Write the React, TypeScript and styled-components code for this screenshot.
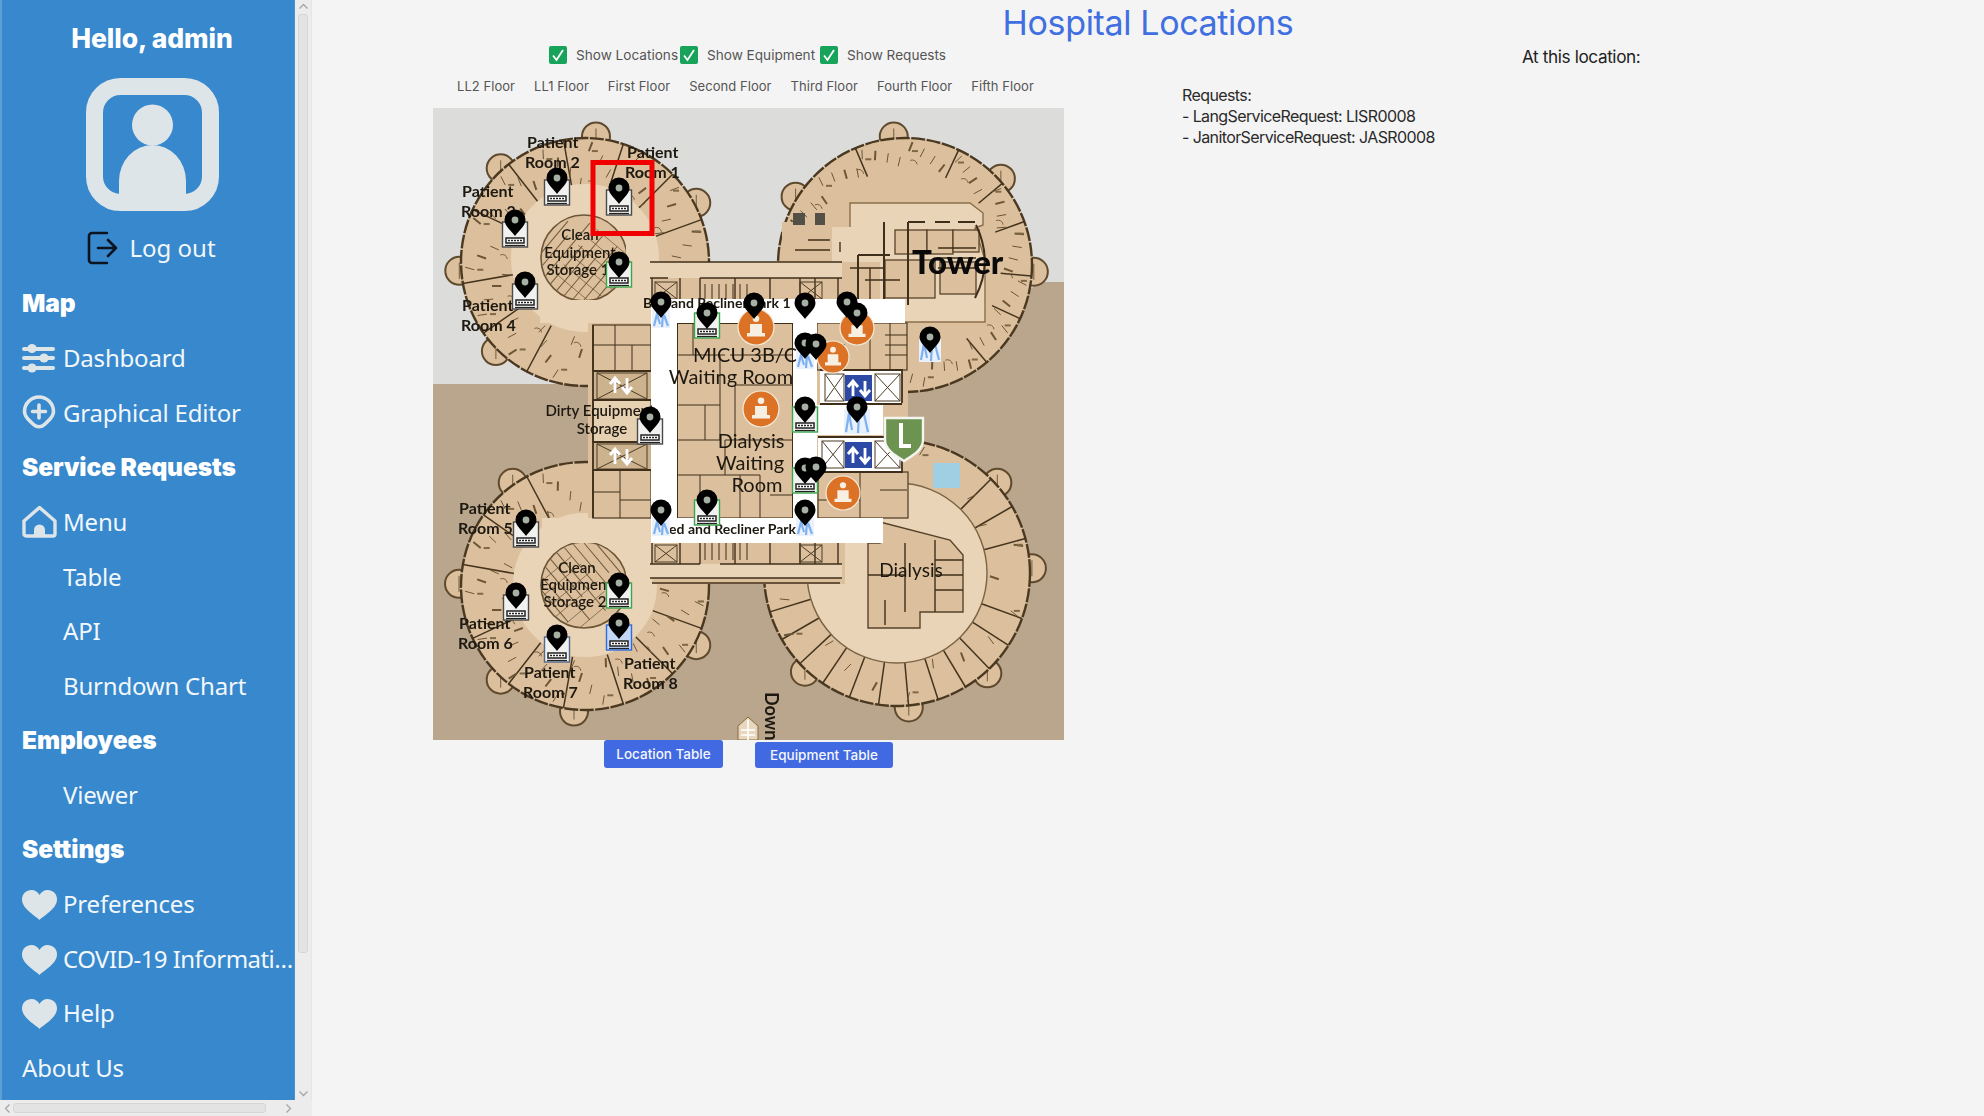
import React from "react";
import styled, { createGlobalStyle } from "styled-components";

const Global = createGlobalStyle`
  html, body { margin: 0; padding: 0; background: #f4f4f4; overflow: hidden; }
  #root { width: 1984px; height: 1116px; }
  * { box-sizing: border-box; }
`;

const Shell = styled.div`
  display: flex;
  width: 1984px;
  height: 1116px;
  background: #f4f4f4;
  font-family: "Inter", "Liberation Sans", sans-serif;
`;

const Rail = styled.div`
  flex: 0 0 312px;
  display: grid;
  grid-template-columns: 295px 17px;
  grid-template-rows: 1100px 16px;
`;

const Sidebar = styled.nav`
  background: #3788cc;
  border-left: 2px solid #5b9fd6;
  border-right: 1px solid #4a92ce;
  overflow: hidden;
  color: #fff;
  font-family: "Noto Sans", "Open Sans", sans-serif;
`;

const Greeting = styled.div`
  height: 76px;
  text-align: center;
  font: 800 26.5px/76px "Inter", sans-serif;
  letter-spacing: -0.1px;
  padding-left: 8px;
  color: #fff;
`;

const AvatarWrap = styled.div`
  display: flex;
  justify-content: center;
  height: 135px;
  padding: 2px 0 0 9px;
`;

const LogoutRow = styled.div`
  height: 65px;
  display: flex;
  align-items: center;
  justify-content: center;
  gap: 11px;
  padding: 8px 0 0 7px;
  font-size: 24px;
  color: #f2f7fb;
`;

const SectionTitle = styled.div`
  height: 54.57px;
  display: flex;
  align-items: center;
  padding-left: 20px;
  font: 900 24.5px "Inter", sans-serif;
  letter-spacing: -0.1px;
  color: #fff;
`;

const NavItem = styled.div<{ $inset?: boolean }>`
  height: 54.57px;
  display: flex;
  align-items: center;
  padding-left: ${(p) => (p.$inset ? "61px" : "20px")};
  font-size: 24px;
  letter-spacing: -0.2px;
  color: #f2f7fb;
  white-space: nowrap;
`;

const IconSlot = styled.span`
  flex: 0 0 41px;
  display: flex;
  align-items: center;
`;

const HeartSlot = styled(IconSlot)`
  padding-top: 3px;
`;

const Truncate = styled.span`
  overflow: hidden;
  text-overflow: ellipsis;
  letter-spacing: -0.55px;
`;

const VScroll = styled.div`
  background: #ececec;
  border-right: 1px solid #e6e6e6;
  display: flex;
  flex-direction: column;
  align-items: center;
  padding: 1px 0;
`;

const VThumb = styled.div`
  width: 10px;
  height: 939px;
  margin: 2px 0 auto;
  background: #e3e3e3;
  border: 1px solid #d6d6d6;
  border-radius: 3px;
`;

const HScroll = styled.div`
  background: #ececec;
  display: flex;
  align-items: center;
  padding: 0 1px 0 2px;
`;

const HThumb = styled.div`
  width: 253px;
  height: 10px;
  margin: 0 auto 0 0;
  background: #e3e3e3;
  border: 1px solid #d6d6d6;
  border-radius: 3px;
`;

const ScrollCorner = styled.div`
  background: #ececec;
`;

const Main = styled.main`
  flex: 1;
  display: flex;
  flex-direction: column;
`;

const Title = styled.h1`
  margin: 0;
  height: 46px;
  text-align: center;
  font: 400 34px/46px "Inter", sans-serif;
  letter-spacing: -0.35px;
  color: #3f6fe0;
`;

const Columns = styled.div`
  display: flex;
  padding-left: 121px;
`;

const MapColumn = styled.section`
  flex: 0 0 631px;
`;

const Toggles = styled.div`
  height: 18px;
  display: flex;
  padding-left: 116px;
`;

const Toggle = styled.label<{ $w: number }>`
  flex: 0 0 ${(p) => p.$w}px;
  display: flex;
  align-items: center;
  gap: 9px;
  font-size: 13.6px;
  color: #555;
  white-space: nowrap;
`;

const CheckBox = styled.span`
  flex: 0 0 18px;
  height: 18px;
  border-radius: 2px;
  background: #17a35a;
  display: flex;
  align-items: center;
  justify-content: center;
`;

const FloorBar = styled.div`
  height: 44px;
  display: flex;
  align-items: center;
  padding-left: 24px;
  gap: 19px;
`;

const Floor = styled.span`
  font-size: 13px;
  letter-spacing: 0.05px;
  color: #555;
  white-space: nowrap;
`;

const MapFrame = styled.div`
  width: 631px;
  height: 632px;
`;

const MapSvg = styled.svg`
  display: block;
  filter: blur(0.55px);
`;

const Buttons = styled.div`
  display: flex;
  padding-left: 171px;
  gap: 32px;
  align-items: flex-end;
  height: 28px;
`;

const TableButton = styled.button<{ $w: number; $h: number }>`
  width: ${(p) => p.$w}px;
  height: ${(p) => p.$h}px;
  border: 0;
  padding: 0;
  border-radius: 3px;
  background: #4169e1;
  color: #f4f6fd;
  font: 500 13.5px "Inter", sans-serif;
`;

const DetailsColumn = styled.section`
  padding: 39px 0 0 118px;
  flex: 0 0 458px;
  font-size: 16px;
  line-height: 21px;
  letter-spacing: -0.6px;
  color: #2a2a2a;
`;

const Line = styled.div`
  white-space: nowrap;
`;

const AtLocation = styled.div`
  font-size: 17.2px;
  line-height: 22px;
  letter-spacing: -0.4px;
  color: #222;
`;

const LIGHT = "#dde5e8";

const Avatar = () => (
  <svg width="133" height="133" viewBox="0 0 133 133">
    <rect x="8.500" y="8.500" width="116" height="116" rx="26" fill="none" stroke={LIGHT} strokeWidth="17" />
    <circle cx="66.500" cy="47" r="20.500" fill={LIGHT} />
    <path d="M33 120 v-17 a33.500 36 0 0 1 67 0 v17 z" fill={LIGHT} />
  </svg>
);

const LogoutIcon = () => (
  <svg width="31" height="34" viewBox="0 0 31 34" fill="none" stroke="#0c1420" strokeWidth="2.600" strokeLinecap="round" strokeLinejoin="round">
    <path d="M20 2 H5 a3 3 0 0 0 -3 3 v24 a3 3 0 0 0 3 3 H20" />
    <path d="M11 17 H29 M21 9 l8 8 l-8 8" />
  </svg>
);

const SlidersIcon = () => (
  <svg width="34" height="30" viewBox="0 0 34 30">
    <g fill={LIGHT}>
      <rect x="0" y="4" width="33" height="4" rx="2" />
      <rect x="0" y="13" width="33" height="4" rx="2" />
      <rect x="0" y="23" width="33" height="4" rx="2" />
      <circle cx="10" cy="5.500" r="4.600" />
      <circle cx="22" cy="15" r="4.600" />
      <circle cx="10" cy="25" r="4.600" />
    </g>
  </svg>
);

const PinPlusIcon = () => (
  <svg width="34" height="34" viewBox="0 0 34 34">
    <path d="M17 2 a14.500 14.500 0 0 1 14.500 14.500 c0 6 -5 9 -9 13 c-3 3 -8 3 -11 0 c-4 -4 -9 -7 -9 -13 A14.500 14.500 0 0 1 17 2 z" fill="none" stroke={LIGHT} strokeWidth="3.600" />
    <path d="M17 10 v13 M10.500 16.500 h13" stroke={LIGHT} strokeWidth="3.600" strokeLinecap="round" />
  </svg>
);

const HomeIcon = () => (
  <svg width="35" height="33" viewBox="0 0 35 33">
    <path d="M17.500 2.500 L33 16 V29 a2 2 0 0 1 -2 2 H4 a2 2 0 0 1 -2 -2 V16 Z" fill="none" stroke={LIGHT} strokeWidth="3.400" strokeLinejoin="round" />
    <path d="M12 31 v-6 a5.500 5.500 0 0 1 11 0 v6 z" fill={LIGHT} />
  </svg>
);

const HeartIcon = () => (
  <svg width="35" height="30" viewBox="0 0 35 30">
    <path d="M17.500 30 C14 26 0 19 0 9.500 C0 3.500 4.500 0 9.500 0 C13 0 16 2 17.500 5 C19 2 22 0 25.500 0 C30.500 0 35 3.500 35 9.500 C35 19 21 26 17.500 30 Z" fill={LIGHT} />
  </svg>
);

const Chevron = ({ dir }: { dir: "up" | "down" | "left" | "right" }) => {
  const rot = { up: 0, right: 90, down: 180, left: 270 }[dir];
  return (
    <svg width="11" height="11" viewBox="0 0 11 11" style={{ transform: `rotate(${rot}deg)` }}>
      <path d="M1.500 7.500 L5.500 3.500 L9.500 7.500" fill="none" stroke="#a5a5a5" strokeWidth="1.300" />
    </svg>
  );
};

const Check = () => (
  <svg width="14" height="14" viewBox="0 0 14 14">
    <path d="M2 7.500 L5.500 12 L12 2" fill="none" stroke="#fff" strokeWidth="1.800" />
  </svg>
);

/* ---------- floor plan ---------- */
const FILL = "#dcc09d";
const RING = "#e9d4b8";
const STROKE = "#5f4a2e";
const polar = (cx: number, cy: number, r: number, deg: number) => {
  const a = (deg * Math.PI) / 180;
  return [cx + r * Math.cos(a), cy + r * Math.sin(a)] as const;
};

type WingProps = { cx: number; cy: number; R: number; inner: number; spokes: number[]; bumps: number[]; clutter?: boolean };

const Wing = ({ cx, cy, R, inner, spokes, bumps, clutter = true }: WingProps) => {
  const marks = Array.from({ length: clutter ? 60 : 22 }, (_, i) => i * (clutter ? 6 : 16.4) + 2);
  const span = R - inner - 16;
  return (
    <g>
      {bumps.map((b) => {
        const [x, y] = polar(cx, cy, R + 2, b);
        return (
          <g key={b}>
            <circle cx={x} cy={y} r="14" fill={FILL} stroke={STROKE} strokeWidth="2" />
            <line x1={x} y1={y - 8} x2={x} y2={y + 8} stroke="#6f5a3c" strokeWidth="1" />
          </g>
        );
      })}
      <circle cx={cx} cy={cy} r={R} fill={FILL} stroke="#4a3820" strokeWidth="2.400" strokeDasharray="14 1.500" />
      {spokes.map((s) => {
        const [x1, y1] = polar(cx, cy, inner, s);
        const [x2, y2] = polar(cx, cy, R, s);
        return <line key={s} x1={x1} y1={y1} x2={x2} y2={y2} stroke="#45341d" strokeWidth="1.500" />;
      })}
      {marks.map((s, i) => {
        const radius = inner + 3 + (((i * 7) % 4) / 3) * span;
        const [fx, fy] = polar(cx, cy, radius, s);
        const [gx, gy] = polar(cx, cy, radius + 9, s + 1.500);
        const [dx, dy] = polar(cx, cy, inner + 9, s + 3);
        return (
          <g key={s} stroke="#6b5536" fill="none">
            <line x1={fx} y1={fy} x2={gx} y2={gy} strokeWidth={i % 3 === 0 ? 2 : 1} />
            {clutter && i % 5 === 0 && <path d={`M${dx - 4} ${dy} a5 5 0 0 1 7 4`} strokeWidth="0.900" />}
            {i % 4 === 1 && <rect x={fx + 3} y={fy - 1} width="6" height="2" fill="#7d6848" stroke="none" />}
          </g>
        );
      })}
    </g>
  );
};

const Ring = ({ cx, cy, r0, r1 }: { cx: number; cy: number; r0: number; r1: number }) => (
  <circle cx={cx} cy={cy} r={(r0 + r1) / 2} fill="none" stroke={RING} strokeWidth={r1 - r0} />
);

const Storage = ({ cx, cy, turn }: { cx: number; cy: number; turn: number }) => {
  const r = 43;
  return (
    <g>
      <circle cx={cx} cy={cy} r={r} fill="#dcc09d" stroke="#6c5637" strokeWidth="1.600" />
      <g transform={`rotate(${turn} ${cx} ${cy})`} stroke="#705a3b" strokeWidth="1">
        {Array.from({ length: 9 }, (_, i) => {
          const d = -36 + i * 9;
          const half = Math.sqrt(r * r - d * d) - 1;
          return <line key={i} x1={cx - half} y1={cy + d} x2={cx + half * (i % 2 ? 0.2 : 0.8)} y2={cy + d} />;
        })}
        {Array.from({ length: 6 }, (_, i) => {
          const d = -30 + i * 12;
          const half = Math.sqrt(r * r - d * d) - 1;
          return <line key={`v${i}`} x1={cx + d} y1={cy - half * 0.3} x2={cx + d} y2={cy + half} strokeWidth="0.700" />;
        })}
      </g>
    </g>
  );
};

const Room = ({ x, y, w, h, fill = FILL }: { x: number; y: number; w: number; h: number; fill?: string }) => (
  <rect x={x} y={y} width={w} height={h} fill={fill} stroke="#57432a" strokeWidth="1.300" />
);

const Wall = ({ d, w = 1.400 }: { d: string; w?: number }) => <path d={d} fill="none" stroke="#3f2f1a" strokeWidth={w} />;

const Elevator = ({ x, y, w, h }: { x: number; y: number; w: number; h: number }) => (
  <g fill="none" stroke="#4c3c27" strokeWidth="1">
    <rect x={x} y={y} width={w} height={h} />
    <path d={`M${x} ${y} L${x + w} ${y + h} M${x + w} ${y} L${x} ${y + h}`} />
  </g>
);

const Arrows = ({ x, y }: { x: number; y: number }) => (
  <path
    d={`M${x + 7} ${y + 21} V${y + 8} M${x + 2} ${y + 12} L${x + 7} ${y + 6} L${x + 12} ${y + 12} M${x + 19} ${y + 6} V${y + 19} M${x + 14} ${y + 15} L${x + 19} ${y + 21} L${x + 24} ${y + 15}`}
    stroke="#fff"
    strokeWidth="2.800"
    fill="none"
  />
);

const ORANGE = [
  [756, 327, 18],
  [857, 328, 17],
  [833, 357, 16],
  [761, 409, 18],
  [843, 493, 17],
];

type CardKind = "bed" | "green" | "plain" | "deep" | "none" | "small" | "mid" | "big";

const PINS: [number, number, CardKind][] = [
  [557, 178, "bed"],
  [619, 188, "bed"],
  [515, 220, "bed"],
  [619, 262, "green"],
  [525, 282, "bed"],
  [661, 302, "small"],
  [707, 313, "green"],
  [754, 303, "none"],
  [805, 303, "none"],
  [847, 302, "none"],
  [857, 313, "none"],
  [930, 337, "mid"],
  [805, 343, "small"],
  [816, 344, "none"],
  [650, 417, "bed"],
  [805, 407, "green"],
  [857, 407, "big"],
  [805, 468, "green"],
  [816, 467, "none"],
  [661, 510, "small"],
  [707, 500, "green"],
  [805, 510, "small"],
  [526, 520, "bed"],
  [516, 593, "bed"],
  [619, 583, "green"],
  [619, 623, "deep"],
  [557, 635, "plain"],
];

const Card = ({ x, y, kind }: { x: number; y: number; kind: CardKind }) => {
  if (kind === "none") return null;
  if (kind === "small" || kind === "mid" || kind === "big") {
    const w = kind === "small" ? 18 : kind === "mid" ? 22 : 26;
    const h = kind === "small" ? 18 : kind === "mid" ? 23 : 25;
    const top = y + (kind === "small" ? 8 : 2);
    return (
      <g>
        <rect x={x - w / 2} y={top} width={w} height={h} fill="#e9f1fc" />
        <path d={`M${x - w / 2 + 2} ${top + h - 2} l3 -${h - 6} l3 ${h - 8} M${x + 1} ${top + h - 1} l1 -${h - 5} M${x + w / 2 - 2} ${top + h - 2} l-4 -${h - 7}`} stroke="#7fb0ef" strokeWidth="2.200" fill="none" />
      </g>
    );
  }
  const frame = kind === "green" ? "#3aa64a" : kind === "deep" ? "#2f6be0" : kind === "plain" ? "#50688a" : "#4a4a4a";
  const bg = kind === "deep" ? "#c4d8f5" : "#f1f2f0";
  const top = y + (kind === "green" ? 0 : 2);
  return (
    <g>
      <rect x={x - 12.500} y={top} width="25" height="25" fill={bg} stroke={frame} strokeWidth="1.400" />
      <path d={`M${x - 9} ${top + 16} h18 v5 h-18 z`} fill="#fff" stroke="#222" strokeWidth="1.500" />
      <path d={`M${x - 7} ${top + 18.500} h14`} stroke="#222" strokeWidth="1.400" strokeDasharray="2 1" />
      <path d={`M${x - 10} ${top + 23.500} h20`} stroke="#222" strokeWidth="1.200" />
    </g>
  );
};

const Pin = ({ x, y }: { x: number; y: number }) => (
  <g>
    <path d={`M${x} ${y + 16} C${x - 3} ${y + 11.500} ${x - 10.500} ${y + 6} ${x - 10.500} ${y} A10.500 10.500 0 0 1 ${x + 10.500} ${y} C${x + 10.500} ${y + 6} ${x + 3} ${y + 11.500} ${x} ${y + 16} Z`} fill="#000" />
    <circle cx={x} cy={y} r="3.400" fill="#a6b0a4" />
  </g>
);

const LABELS: [string, number, number][] = [
  ["Patient", 527, 148],
  ["Room 2", 525, 168],
  ["Patient", 627, 158],
  ["Room 1", 625, 178],
  ["Patient", 462, 197],
  ["Room 3", 461, 217],
  ["Patient", 462, 311],
  ["Room 4", 461, 331],
  ["Patient", 459, 514],
  ["Room 5", 458, 534],
  ["Patient", 459, 629],
  ["Room 6", 458, 649],
  ["Patient", 524, 678],
  ["Room 7", 523, 698],
  ["Patient", 624, 669],
  ["Room 8", 623, 689],
];

const CENTERED: [string, number, number, number, number][] = [
  ["Clean", 580, 240, 15, 600],
  ["Equipment", 580, 258, 15, 600],
  ["Storage 1", 578, 275, 15, 600],
  ["Clean", 577, 573, 15, 600],
  ["Equipment", 576, 590, 15, 600],
  ["Storage 2", 575, 607, 15, 600],
  ["Dirty Equipment", 600, 416, 15, 600],
  ["Storage", 602, 434, 15, 600],
  ["MICU 3B/C", 745, 362, 20, 400],
  ["Waiting Room", 731, 384, 20, 400],
  ["Dialysis", 751, 448, 20, 400],
  ["Waiting", 750, 470, 20, 400],
  ["Room", 757, 492, 20, 400],
  ["Dialysis", 911, 577, 19, 400],
];

const PlanText = styled.text`
  font-family: "Lato", "Open Sans", sans-serif;
  fill: #1d1810;
`;

const BlockTitle = styled.text`
  font-family: "Lato", sans-serif;
  font-weight: 900;
  fill: #0a0a0a;
`;

const FloorPlan = () => (
  <MapSvg width="631" height="632" viewBox="433 108 631 632">
    <rect x="433" y="108" width="631" height="632" fill="#b9a68d" />
    <path d="M433 108 H1064 V282 H1040 L900 384 H433 Z" fill="#dcdcda" />

    <Wing cx={585} cy={262} R={124} inner={72} bumps={[-85, -132, 176, -28, 135, 32]} spokes={[-155, -128, -100, -72, -45, -20, 170, 145, 118]} />
    <Wing cx={905} cy={265} R={127} inner={96} bumps={[-95, -42, -148, 3]} spokes={[-113, -65, -40, -20, 5, 25, 50]} />
    <Wing cx={585} cy={586} R={124} inner={72} bumps={[95, 132, 181, 28, -125]} spokes={[155, 128, 100, 72, 45, 20, -170, -145, -118]} />
    <Wing cx={897} cy={573} R={133} inner={90} clutter={false} bumps={[85, 133, 48, -2, -42]} spokes={[20, 33, 46, 59, 72, 85, 98, 111, 124, 137, 150, 163, 176, -15, -30, -45]} />

    <Ring cx={585} cy={258} r0={40} r1={74} />
    <Ring cx={585} cy={585} r0={40} r1={72} />
    <Storage cx={584} cy={258} turn={-50} />
    <Storage cx={584} cy={585} turn={50} />

    {/* tower core */}
    <path d="M872 203 H970 L983 213 V225 L975 228 L985 260 V322 H850 V203 Z" fill={RING} stroke="#8a6f49" strokeWidth="1.400" />
    <rect x="782" y="222" width="50" height="40" fill={FILL} />
    <rect x="832" y="227" width="40" height="40" fill={RING} />
    <rect x="840" y="262" width="40" height="38" fill={FILL} />
    <Room x={895} y={230} w={32} h={24} />
    <Room x={927} y={230} w={26} h={24} />
    <Room x={953} y={230} w={26} h={22} />
    <Room x={885} y={260} w={50} h={38} />
    <Room x={940} y={262} w={36} h={32} />
    <rect x="793" y="213" width="12" height="12" fill="#555046" />
    <rect x="815" y="213" width="10" height="12" fill="#555046" />
    <Wall d="M884 222 V300 M908 222 V305 M858 255 H890 M858 255 V300 M908 222 H925 M935 222 H950 M958 222 H975 M976 225 Q994 262 975 298" w={2} />
    <Wall d="M850 268 H885 M865 280 H900 M870 268 V300 M938 248 H976 M938 258 H976 M938 268 H976 M840 242 V252 M808 240 H830 M795 250 H830" />

    {/* dialysis core */}
    <circle cx="897" cy="573" r="90" fill={RING} stroke="#7b6444" strokeWidth="1.400" />
    <path d="M880 522 L950 540 L963 555 V612 H920 V628 H868 V543 H880 Z" fill={FILL} stroke="#57432a" strokeWidth="1.400" />
    <Wall d="M868 575 H905 M905 543 V612 M935 540 V612 M935 560 H963 M935 575 H963 M935 590 H963 M885 600 V625" />

    {/* main body */}
    <path d="M651 262 H850 V323 H908 V518 H845 V584 H651 V518 H588 V323 H651 Z" fill={FILL} />
    <rect x="540" y="300" width="112" height="23" fill={RING} />
    <rect x="542" y="518" width="110" height="25" fill={RING} />
    <rect x="626" y="222" width="26" height="80" fill={RING} />
    <rect x="626" y="540" width="26" height="62" fill={RING} />
    <rect x="650" y="262" width="192" height="16" fill={RING} />
    <rect x="650" y="564" width="192" height="14" fill={RING} />
    <Wall d="M650 262 H842 M650 278 H668 M700 278 H842 M650 578 H842 M650 564 H700 M720 564 H842 M652 583 H840" w={1.600} />
    {[652, 680, 700, 735, 770, 800, 815, 838].map((x) => (
      <g key={x}>
        <line x1={x} y1="278" x2={x} y2="300" stroke="#3f2f1a" strokeWidth="1.400" />
        <line x1={x} y1="543" x2={x} y2="564" stroke="#3f2f1a" strokeWidth="1.400" />
      </g>
    ))}
    {[705, 712, 719, 726, 733, 740, 747].map((x) => (
      <g key={x}>
        <line x1={x} y1="284" x2={x} y2="300" stroke="#3f2f1a" strokeWidth="1" />
        <line x1={x} y1="543" x2={x} y2="560" stroke="#3f2f1a" strokeWidth="1" />
      </g>
    ))}
    <Elevator x={655} y={282} w={22} h={17} />
    <Elevator x={800} y={282} w={22} h={17} />
    <Elevator x={655} y={545} w={22} h={17} />
    <Elevator x={800} y={545} w={22} h={17} />

    <Room x={593} y={325} w={58} h={46} />
    <Wall d="M615 325 V371 M593 345 H651 M632 345 V371" w={1} />
    <Room x={593} y={400} w={58} h={42} fill="#e6d0b2" />
    <Room x={593} y={470} w={58} h={48} />
    <Wall d="M620 470 V518 M593 492 H620 M620 500 H651" w={1} />
    <rect x="593" y="371" width="58" height="29" fill="#cdb28e" />
    <rect x="593" y="442" width="58" height="28" fill="#cdb28e" />
    <Elevator x={597} y={373} w={50} h={26} />
    <Elevator x={597} y={444} w={50} h={25} />
    <Arrows x={608} y={372} />
    <Arrows x={608} y={443} />
    <Wall d="M593 325 V518 M593 371 H651 M593 400 H651 M593 442 H651 M593 470 H651" w={1.800} />

    {/* centre rooms */}
    <Room x={677} y={323} w={116} h={195} />
    <Wall d="M677 355 H725 M677 405 H720 M720 355 V440 M677 440 H720 M677 475 H760 M725 440 H792 M725 440 V475 M792 385 H735 M735 385 V440 M700 475 V518 M740 475 V518 M760 475 V518 M730 355 H792 M693 323 V355 M705 405 V440 M770 495 H792" w={1} />
    <Wall d="M677 323 H793 M793 323 V518 M677 323 V518" w={2} />
    <Room x={817} y={323} w={90} h={47} />
    <Wall d="M817 345 H845 M870 323 V370 M890 323 V370 M885 335 H907 M885 345 H907 M885 355 H907" w={1} />
    <Room x={818} y={472} w={90} h={46} />
    <Wall d="M860 472 V518 M818 500 H860 M880 490 H907" w={1} />

    {/* white corridors */}
    <rect x="651" y="299" width="254" height="24" fill="#fff" />
    <rect x="651" y="299" width="26" height="244" fill="#fff" />
    <rect x="651" y="518" width="232" height="25" fill="#fff" />
    <rect x="793" y="299" width="24" height="219" fill="#fff" />
    <rect x="793" y="405" width="90" height="30" fill="#fff" />
    <rect x="820" y="370" width="82" height="35" fill="#fff" />
    <rect x="818" y="437" width="84" height="35" fill="#fff" />
    <Wall d="M820 370 H902 V403 M818 472 H902 V437 M820 404 H902 M818 437 H902" w={1.800} />
    <Elevator x={825} y={374} w={19} h={27} />
    <Elevator x={875} y={374} w={25} h={27} />
    <Elevator x={822} y={441} w={22} h={27} />
    <Elevator x={875} y={441} w={25} h={27} />
    <rect x="845" y="375" width="27" height="26" fill="#2c4aa5" />
    <rect x="845" y="442" width="27" height="26" fill="#2c4aa5" />
    <Arrows x={846} y={375} />
    <Arrows x={846} y={442} />

    <PlanText x="643" y="308" fontSize="14" fontWeight="700">Bed and Recliner Park 1</PlanText>
    <PlanText x="660" y="534" fontSize="14" fontWeight="700">Bed and Recliner Park 1</PlanText>

    {ORANGE.map(([x, y, r]) => (
      <g key={`${x}-${y}`}>
        <circle cx={x} cy={y} r={r} fill="#dc7225" stroke="#f3ead9" strokeWidth="1.200" />
        <path d={`M${x - r / 2} ${y + r / 3} h${r} v${r / 5} h-${r} z M${x - r / 3} ${y - r / 6} h${(2 * r) / 3} v${r / 2} h-${(2 * r) / 3} z`} fill="#f8efe3" />
        <circle cx={x} cy={y - r / 2.200} r={r / 5.500} fill="#f8efe3" />
      </g>
    ))}

    <path d="M885 418 H923 V440 C923 450 912 456 904 461 C896 456 885 450 885 440 Z" fill="#6d9350" stroke="#f4f4f0" strokeWidth="2.400" />
    <path d="M901 423 V446 H911" fill="none" stroke="#fff" strokeWidth="4" />
    <rect x="933" y="463" width="27" height="25" fill="#a0cfe3" />

    {LABELS.map(([t, x, y]) => (
      <PlanText key={`${t}${x}${y}`} x={x} y={y} fontSize="16" fontWeight="700">{t}</PlanText>
    ))}
    {CENTERED.map(([t, x, y, s, w]) => (
      <PlanText key={`${t}${x}${y}`} x={x} y={y} textAnchor="middle" fontSize={s} fontWeight={w}>{t}</PlanText>
    ))}
    <BlockTitle x="912" y="274" fontSize="33">Tower</BlockTitle>
    <PlanText transform="translate(765 692) rotate(90)" fontSize="18" fontWeight="700">Down</PlanText>
    <path d="M748 717 L758 726 V740 H738 V726 Z" fill="#e7d7bf" stroke="#8a6a3a" strokeWidth="1" />
    <path d="M741 730 h14 M741 735 h14 M748 720 v20" stroke="#fff" strokeWidth="1.600" />

    {PINS.map(([x, y, k]) => (
      <Card key={`c${x}${y}`} x={x} y={y} kind={k} />
    ))}
    {PINS.map(([x, y]) => (
      <Pin key={`p${x}${y}`} x={x} y={y} />
    ))}

    <rect x="593" y="162.500" width="59" height="71" fill="none" stroke="#f00000" strokeWidth="5" />
  </MapSvg>
);

const App = () => (
  <>
    <Global />
    <Shell>
      <Rail>
        <Sidebar>
          <Greeting>Hello, admin</Greeting>
          <AvatarWrap>
            <Avatar />
          </AvatarWrap>
          <LogoutRow>
            <LogoutIcon />
            Log out
          </LogoutRow>
          <SectionTitle>Map</SectionTitle>
          <NavItem>
            <IconSlot><SlidersIcon /></IconSlot>Dashboard
          </NavItem>
          <NavItem>
            <IconSlot><PinPlusIcon /></IconSlot>Graphical Editor
          </NavItem>
          <SectionTitle>Service Requests</SectionTitle>
          <NavItem>
            <IconSlot><HomeIcon /></IconSlot>Menu
          </NavItem>
          <NavItem $inset>Table</NavItem>
          <NavItem $inset>API</NavItem>
          <NavItem $inset>Burndown Chart</NavItem>
          <SectionTitle>Employees</SectionTitle>
          <NavItem $inset>Viewer</NavItem>
          <SectionTitle>Settings</SectionTitle>
          <NavItem>
            <HeartSlot><HeartIcon /></HeartSlot>Preferences
          </NavItem>
          <NavItem>
            <HeartSlot><HeartIcon /></HeartSlot>
            <Truncate>COVID-19 Information</Truncate>
          </NavItem>
          <NavItem>
            <HeartSlot><HeartIcon /></HeartSlot>Help
          </NavItem>
          <NavItem>About Us</NavItem>
        </Sidebar>
        <VScroll>
          <Chevron dir="up" />
          <VThumb />
          <Chevron dir="down" />
        </VScroll>
        <HScroll>
          <Chevron dir="left" />
          <HThumb />
          <Chevron dir="right" />
        </HScroll>
        <ScrollCorner />
      </Rail>
      <Main>
        <Title>Hospital Locations</Title>
        <Columns>
          <MapColumn>
            <Toggles>
              <Toggle $w={131}><CheckBox><Check /></CheckBox>Show Locations</Toggle>
              <Toggle $w={140}><CheckBox><Check /></CheckBox>Show Equipment</Toggle>
              <Toggle $w={140}><CheckBox><Check /></CheckBox>Show Requests</Toggle>
            </Toggles>
            <FloorBar>
              {["LL2 Floor", "LL1 Floor", "First Floor", "Second Floor", "Third Floor", "Fourth Floor", "Fifth Floor"].map((f) => (
                <Floor key={f}>{f}</Floor>
              ))}
            </FloorBar>
            <MapFrame>
              <FloorPlan />
            </MapFrame>
            <Buttons>
              <TableButton $w={119} $h={28}>Location Table</TableButton>
              <TableButton $w={138} $h={26}>Equipment Table</TableButton>
            </Buttons>
          </MapColumn>
          <DetailsColumn>
            <Line>Requests:</Line>
            <Line>- LangServiceRequest: LISR0008</Line>
            <Line>- JanitorServiceRequest: JASR0008</Line>
          </DetailsColumn>
          <AtLocation>At this location:</AtLocation>
        </Columns>
      </Main>
    </Shell>
  </>
);

export default App;
